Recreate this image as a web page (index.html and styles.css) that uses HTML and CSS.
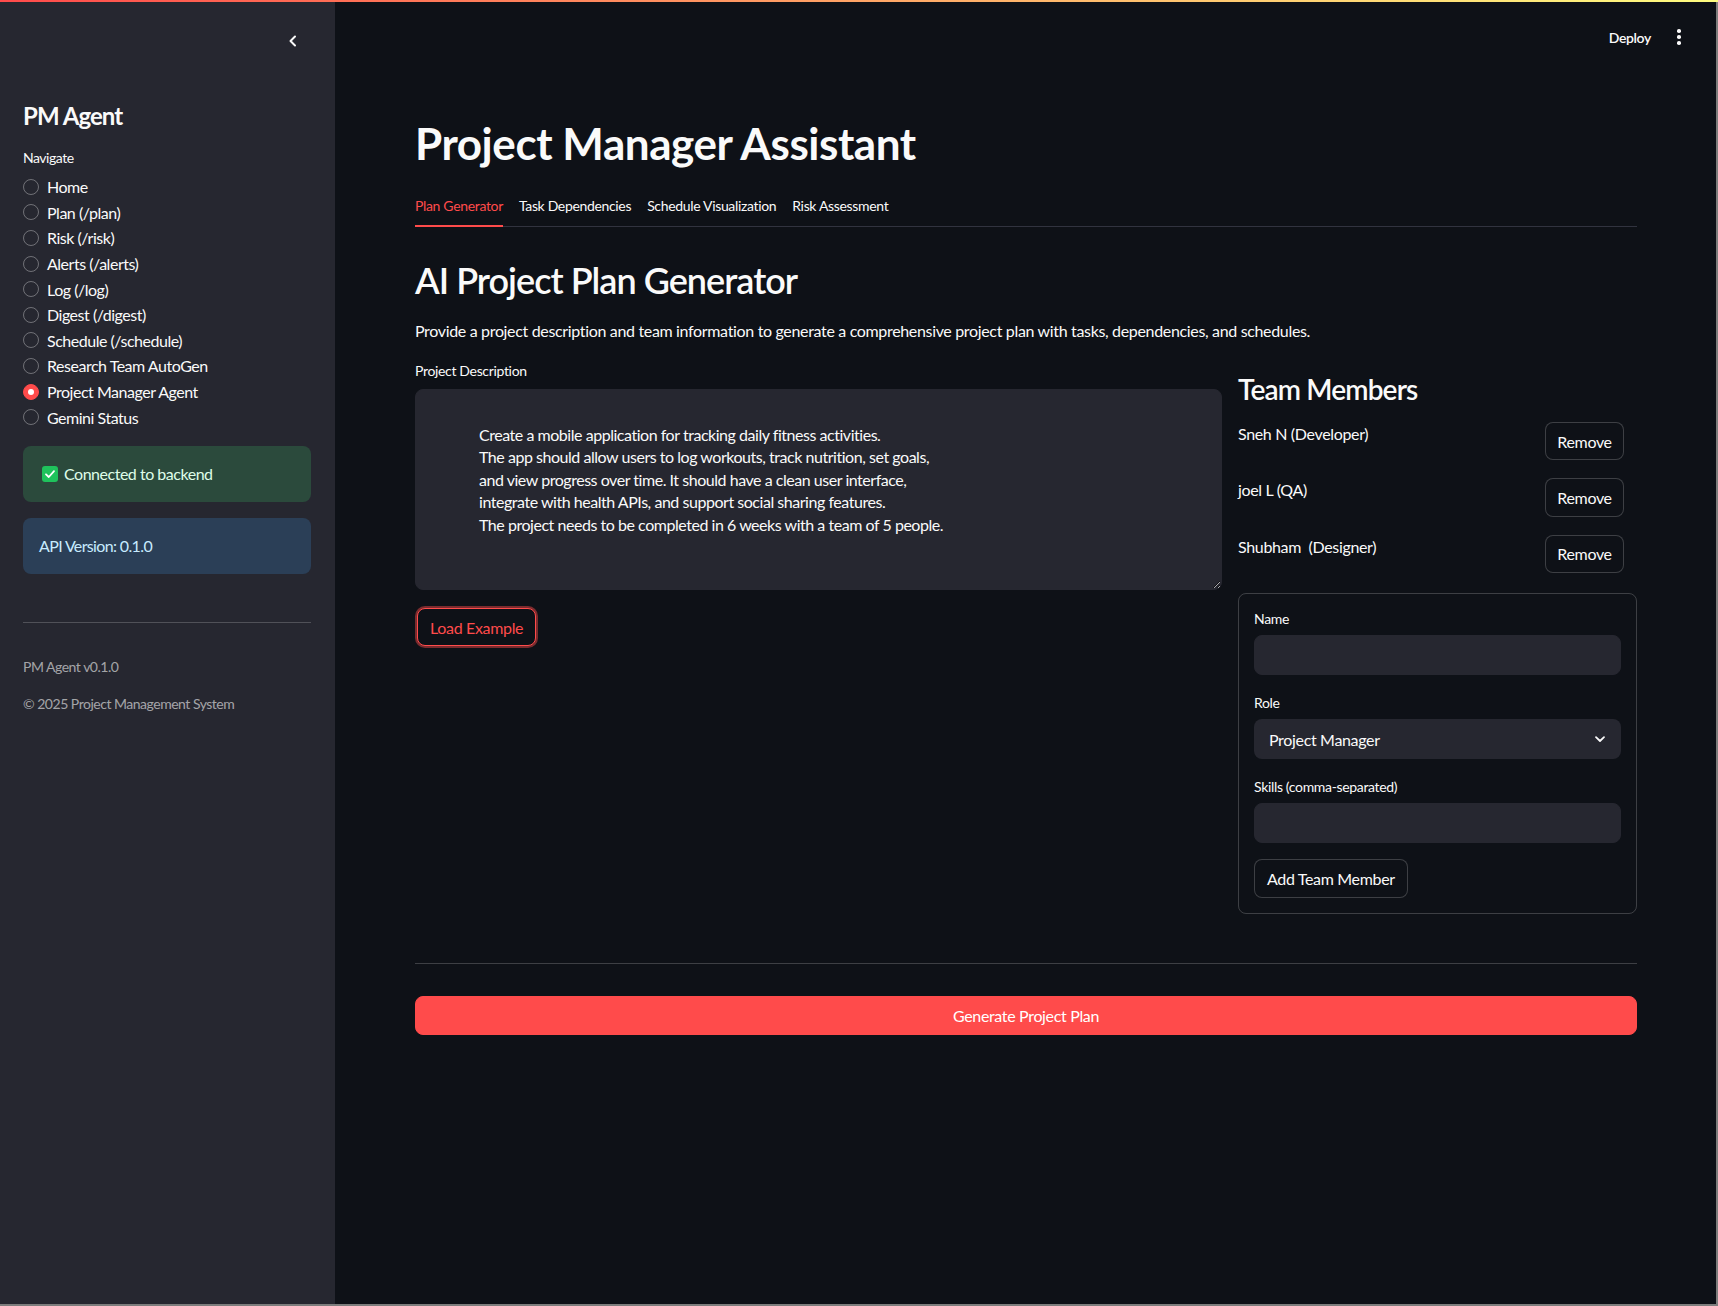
FILE: index.html
```html
<!DOCTYPE html>
<html lang="en">
<head>
<meta charset="utf-8">
<title>Project Manager Assistant</title>
<link rel="stylesheet" href="styles.css">
</head>
<body>
<div class="deco"></div>
<div class="app">
  <aside class="sidebar">
    <div class="sidebar-top">
      <button class="collapse" aria-label="Collapse sidebar">
        <svg width="16" height="16" viewBox="0 0 16 16" fill="none"><path d="M10 3.5 5.5 8l4.5 4.5" stroke="#fafafa" stroke-width="2" stroke-linecap="round" stroke-linejoin="round"/></svg>
      </button>
    </div>
    <h2 class="brand">PM Agent</h2>
    <div class="nav-label">Navigate</div>
    <ul class="radio-list">
      <li class="radio"><span class="dot"></span>Home</li>
      <li class="radio"><span class="dot"></span>Plan (/plan)</li>
      <li class="radio"><span class="dot"></span>Risk (/risk)</li>
      <li class="radio"><span class="dot"></span>Alerts (/alerts)</li>
      <li class="radio"><span class="dot"></span>Log (/log)</li>
      <li class="radio"><span class="dot"></span>Digest (/digest)</li>
      <li class="radio"><span class="dot"></span>Schedule (/schedule)</li>
      <li class="radio"><span class="dot"></span>Research Team AutoGen</li>
      <li class="radio selected"><span class="dot"></span>Project Manager Agent</li>
      <li class="radio"><span class="dot"></span>Gemini Status</li>
    </ul>
    <div class="alert success">
      <span class="check"><svg width="16" height="16" viewBox="0 0 16 16"><rect width="16" height="16" rx="3" fill="#1fc35c"/><path d="M4 8.3 6.8 11 12 5.2" stroke="#fff" stroke-width="1.8" fill="none" stroke-linecap="round" stroke-linejoin="round"/></svg></span>
      Connected to backend
    </div>
    <div class="alert info">API Version: 0.1.0</div>
    <hr class="side-rule">
    <p class="caption first">PM Agent v0.1.0</p>
    <p class="caption">© 2025 Project Management System</p>
  </aside>

  <main class="main">
    <header class="topbar">
      <span class="deploy">Deploy</span>
      <span class="kebab" aria-label="Menu"><i></i><i></i><i></i></span>
    </header>
    <div class="content">
      <h1 class="title">Project Manager Assistant</h1>
      <nav class="tabs">
        <span class="tab active">Plan Generator</span>
        <span class="tab">Task Dependencies</span>
        <span class="tab">Schedule Visualization</span>
        <span class="tab">Risk Assessment</span>
      </nav>
      <h2 class="section-title">AI Project Plan Generator</h2>
      <p class="lead">Provide a project description and team information to generate a comprehensive project plan with tasks, dependencies, and schedules.</p>

      <div class="columns">
        <section class="col-left">
          <label class="field-label" for="desc">Project Description</label>
          <textarea id="desc" class="desc">Create a mobile application for tracking daily fitness activities.
The app should allow users to log workouts, track nutrition, set goals,
and view progress over time. It should have a clean user interface,
integrate with health APIs, and support social sharing features.
The project needs to be completed in 6 weeks with a team of 5 people.</textarea>
          <button class="btn btn-focus">Load Example</button>
        </section>

        <section class="col-right">
          <h3 class="team-title">Team Members</h3>
          <div class="members">
            <div class="member"><span class="member-name">Sneh N (Developer)</span><button class="btn">Remove</button></div>
            <div class="member"><span class="member-name">joel L (QA)</span><button class="btn">Remove</button></div>
            <div class="member"><span class="member-name">Shubham&nbsp; (Designer)</span><button class="btn">Remove</button></div>
          </div>
          <form class="member-form">
            <label class="field-label" for="name">Name</label>
            <input id="name" class="input" type="text">
            <label class="field-label spaced">Role</label>
            <div class="select"><span>Project Manager</span>
              <svg width="14" height="14" viewBox="0 0 14 14" fill="none"><path d="M3 5.2 7 9l4-3.8" stroke="#fafafa" stroke-width="1.8" stroke-linecap="round" stroke-linejoin="round"/></svg>
            </div>
            <label class="field-label spaced" for="skills">Skills (comma-separated)</label>
            <input id="skills" class="input" type="text">
            <button type="button" class="btn add-btn">Add Team Member</button>
          </form>
        </section>
      </div>

      <hr class="rule">
      <button class="btn-primary">Generate Project Plan</button>
    </div>
  </main>
</div>
</body>
</html>
```

FILE: styles.css
```css
* { box-sizing: border-box; }
html, body { margin: 0; padding: 0; }
body {
  background: #0e1117;
  color: #fafafa;
  font-family: Lato, "Source Sans Pro", "Noto Sans", sans-serif;
  font-size: 16px;
  letter-spacing: -0.021em;
  height: 100vh;
  overflow: hidden;
}
button, input, textarea { letter-spacing: inherit; }
.deco {
  height: 2px;
  background: linear-gradient(90deg, #ff4b4b, #fffd80);
}
.app {
  display: flex;
  height: calc(100vh - 2px);
  border-right: 2px solid #7d7d7d;
  border-bottom: 2px solid #7d7d7d;
}

/* Sidebar */
.sidebar {
  width: 335px;
  flex: none;
  background: #262730;
  padding: 0 24px 0 23px;
  letter-spacing: -0.03em;
}
.sidebar-top {
  height: 78px;
  display: flex;
  align-items: center;
  justify-content: flex-end;
  padding-right: 4px;
}
.collapse {
  background: none;
  border: none;
  padding: 0;
  width: 28px;
  height: 28px;
  display: flex;
  align-items: center;
  justify-content: center;
}
.brand {
  margin: 21px 0 0;
  font-size: 24px;
  font-weight: 700;
  line-height: 29px;
  letter-spacing: -0.04em;
}
.nav-label {
  margin-top: 18px;
  font-size: 14px;
  line-height: 20px;
}
.radio-list {
  list-style: none;
  margin: 6px 0 0;
  padding: 0;
}
.radio {
  height: 25.6px;
  display: flex;
  align-items: center;
  gap: 8px;
  font-size: 16px;
}
.dot {
  width: 16px;
  height: 16px;
  border-radius: 50%;
  border: 1px solid rgba(250, 250, 250, 0.35);
  flex: none;
}
.radio.selected .dot {
  background: #ff4b4b;
  border-color: #ff4b4b;
  display: flex;
  align-items: center;
  justify-content: center;
}
.radio.selected .dot::after {
  content: "";
  width: 6px;
  height: 6px;
  border-radius: 50%;
  background: #fff;
}
.alert {
  height: 56px;
  border-radius: 8px;
  display: flex;
  align-items: center;
  padding: 0 16px;
  font-size: 16px;
  margin-top: 16px;
}
.success {
  background: #2b4a3c;
  color: #dffde9;
}
.check { display: flex; margin: 0 6px 0 3px; }
.info {
  background: #2b3f57;
  color: #c7ebff;
  letter-spacing: -0.04em;
}
.side-rule {
  margin: 48px 0 0;
  border: none;
  border-top: 1px solid rgba(250, 250, 250, 0.2);
}
.caption {
  margin: 17px 0 0;
  font-size: 14px;
  line-height: 20px;
  color: rgba(250, 250, 250, 0.6);
  letter-spacing: -0.035em;
}
.caption.first { margin-top: 34px; }

/* Main */
.main {
  flex: 1;
  min-width: 0;
}
.topbar {
  height: 70px;
  display: flex;
  align-items: center;
  justify-content: flex-end;
  gap: 16px;
  padding-right: 25px;
}
.deploy {
  font-size: 14px;
  font-weight: 600;
}
.kebab {
  width: 24px;
  height: 24px;
  display: flex;
  flex-direction: column;
  align-items: center;
  justify-content: center;
  gap: 2.5px;
}
.kebab i {
  width: 3.5px;
  height: 3.5px;
  border-radius: 50%;
  background: #fafafa;
}
.content {
  padding: 0 79px 0 80px;
}
.title {
  margin: 45px 0 0;
  font-size: 44px;
  font-weight: 700;
  line-height: 53px;
  letter-spacing: -0.01em;
}
.tabs {
  margin-top: 16px;
  display: flex;
  gap: 16px;
  border-bottom: 1px solid #31333f;
  height: 41px;
}
.tab {
  height: 41px;
  line-height: 40px;
  font-size: 14px;
  white-space: nowrap;
}
.tab.active {
  color: #ff4b4b;
  border-bottom: 2px solid #ff4b4b;
}
.section-title {
  margin: 32px 0 0;
  font-size: 36px;
  font-weight: 600;
  line-height: 43px;
  letter-spacing: -0.027em;
}
.lead {
  margin: 17px 0 0;
  line-height: 24px;
}
.columns {
  margin-top: 16px;
  display: grid;
  grid-template-columns: 807px 1fr;
  gap: 16px;
}
.field-label {
  display: block;
  font-size: 14px;
  line-height: 24px;
  height: 24px;
}
.col-left .field-label { margin-bottom: 6px; }
.desc {
  display: block;
  width: 100%;
  height: 201px;
  background: #262730;
  color: #fafafa;
  border: 1px solid #262730;
  border-radius: 8px;
  padding: 34px 16px 16px 63px;
  font-family: inherit;
  font-size: 16px;
  line-height: 22.4px;
  letter-spacing: -0.029em;
  resize: vertical;
  color-scheme: dark;
  outline: none;
}
.btn {
  background: #0e1117;
  color: #fafafa;
  border: 1px solid rgba(250, 250, 250, 0.2);
  border-radius: 8px;
  font-family: inherit;
  font-size: 16px;
  height: 38px;
  padding: 0 12px;
  cursor: pointer;
}
.btn-focus {
  margin: 18px 0 0 2px;
  color: #ff4b4b;
  border-color: #ff4b4b;
  box-shadow: 0 0 0 2px rgba(255, 75, 75, 0.45);
}
.team-title {
  margin: 13px 0 0;
  font-size: 28px;
  font-weight: 600;
  line-height: 34px;
  letter-spacing: -0.03em;
}
.members {
  margin-top: 16px;
  display: flex;
  flex-direction: column;
  gap: 18px;
}
.member {
  display: grid;
  grid-template-columns: 1fr 92px;
  gap: 0;
  align-items: start;
}
.member-name {
  line-height: 24px;
}
.member .btn { width: 79px; height: 38.4px; padding: 0; }
.member-form {
  margin-top: 20px;
  border: 1px solid rgba(250, 250, 250, 0.2);
  border-radius: 8px;
  padding: 13px 15px 15px;
  display: flex;
  flex-direction: column;
}
.member-form .field-label { margin-bottom: 4px; }
.member-form .field-label.spaced { margin-top: 16px; }
.input {
  height: 40px;
  width: 100%;
  background: #262730;
  border: 1px solid #262730;
  border-radius: 8px;
  color: #fafafa;
  font-family: inherit;
  font-size: 16px;
  padding: 0 16px;
  outline: none;
}
.select {
  height: 40px;
  background: #262730;
  border-radius: 8px;
  display: flex;
  align-items: center;
  justify-content: space-between;
  padding: 0 14px 0 15px;
}
.add-btn {
  margin-top: 16px;
  align-self: flex-start;
  height: 39px;
}
.rule {
  margin: 49px 0 0;
  border: none;
  border-top: 1px solid rgba(250, 250, 250, 0.2);
}
.btn-primary {
  margin-top: 32px;
  width: 100%;
  height: 39px;
  background: #ff4b4b;
  border: 1px solid #ff4b4b;
  border-radius: 8px;
  color: #fff;
  font-family: inherit;
  font-size: 16px;
}
```
